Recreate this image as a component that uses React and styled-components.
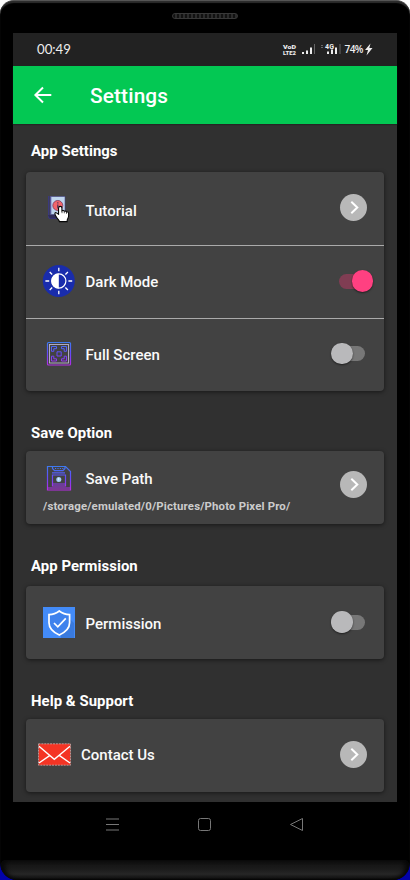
import React, { useState } from "react";
import styled, { createGlobalStyle } from "styled-components";

const GlobalStyle = createGlobalStyle`
  * { box-sizing: border-box; }
  body { margin: 0; background: linear-gradient(#fff 0 440px, #0202a8 440px); font-family: Roboto, sans-serif; }
  button { font: inherit; border: 0; padding: 0; background: none; cursor: pointer; }
  svg { display: block; }
`;

const Phone = styled.div`
  width: 410px;
  height: 880px;
  display: flex;
  flex-direction: column;
  background: #000;
  border-radius: 14px 14px 17px 17px;
  border-top: 1px solid #555;
  box-shadow: inset 0 2px 1px #2d2d2d;
  overflow: hidden;
`;

const Earpiece = styled.div`
  width: 66px;
  height: 6px;
  margin: 12px auto 14px;
  border: 1px solid #383838;
  border-radius: 3px;
  background: repeating-linear-gradient(90deg, #111 0 2px, #2b2b2b 2px 4px);
`;

const Screen = styled.main`
  width: 384px;
  height: 769px;
  margin: 0 auto 0 13px;
  display: flex;
  flex-direction: column;
  background: #303030;
`;

const StatusBar = styled.div`
  height: 33px;
  flex: none;
  display: flex;
  justify-content: space-between;
  padding: 0 23px 0 24px;
  background: #222;
  color: #eee;
`;

const Clock = styled.time`
  font: 400 13.2px/33px Lato, sans-serif;
  letter-spacing: 0;
`;

const Toolbar = styled.header`
  height: 58px;
  flex: none;
  display: flex;
  align-items: center;
  padding-left: 20px;
  background: #03c853;
  box-shadow: 0 1px 1px #252525;
  color: #fff;
`;

const Title = styled.h1`
  margin: 2px 0 0 37px;
  font-size: 20.8px;
  font-weight: 500;
  line-height: 26px;
  letter-spacing: 0.15px;
`;

const Content = styled.div`
  padding: 0 13px;
`;

const Heading = styled.h2`
  margin: ${(p) => p.$top}px 0 ${(p) => p.$bottom}px 5px;
  color: #fff;
  font-size: 14.9px;
  font-weight: 700;
  line-height: 20px;
  letter-spacing: 0.05px;
`;

const Card = styled.section`
  width: 358px;
  border-radius: 4px;
  background: #424242;
  box-shadow: 0 1px 4px #0008;
`;

const Row = styled.div`
  height: 73px;
  display: flex;
  align-items: center;
  padding: 0 17px 0 ${(p) => p.$left ?? 15}px;
  & + & { border-top: 1px solid #aaa; }
`;

const IconCell = styled.span`
  width: 36px;
  flex: none;
  display: flex;
  justify-content: center;
  margin-bottom: ${(p) => p.$lift ?? 2}px;
`;

const Label = styled.span`
  flex: 1;
  margin-left: ${(p) => p.$gap ?? 8.5}px;
  padding-bottom: 1px;
  padding-top: ${(p) => p.$drop ?? 0}px;
  color: #fafafa;
  font-size: 15px;
  font-weight: 500;
  line-height: 20px;
`;

const RoundButton = styled.button`
  width: 27px;
  height: 27px;
  margin-bottom: ${(p) => p.$lift ?? 2}px;
  border-radius: 50%;
  background: #b8b8b8;
`;

const Track = styled.button`
  width: 34px;
  height: 15px;
  margin-right: ${(p) => (p.$on ? -6 : 2)}px;
  margin-bottom: ${(p) => p.$lift ?? 3}px;
  display: flex;
  align-items: center;
  justify-content: ${(p) => (p.$on ? "flex-end" : "flex-start")};
  border-radius: 8px;
  background: ${(p) => (p.$on ? "#803d53" : "#777")};
`;

const Thumb = styled.span`
  width: 21.5px;
  height: 21.5px;
  flex: none;
  border-radius: 50%;
  background: ${(p) => (p.$on ? "#ff4081" : "#b9b9bb")};
  box-shadow: 0 1px 2px #0008;
`;

const PathCard = styled(Card)`
  height: 73px;
  display: flex;
  align-items: center;
  justify-content: space-between;
  padding-right: 17px;
`;

const PathInfo = styled.div`
  height: 73px;
  padding: 10px 0 0 15px;
`;

const PathName = styled.div`
  display: flex;
  align-items: center;
  height: 34px;
`;

const PathText = styled.div`
  margin: 4px 0 0 2px;
  color: #ccc;
  font-size: 11.4px;
  font-weight: 700;
  line-height: 14px;
  letter-spacing: 0.16px;
`;

const NavBar = styled.nav`
  height: 45px;
  display: flex;
  align-items: center;
  padding-left: 105px;
  gap: 77px;
`;

const Chin = styled.div`
  height: 20px;
  margin: 13px 1px 0;
  border-radius: 5px 5px 15px 15px;
  background: linear-gradient(#101010, #1b1b1b 45%, #262626 70%, #191919 90%, #000);
  box-shadow: inset 4px 0 4px #080808, inset -4px 0 4px #080808;
`;

const StatusIcons = () => (
  <svg width="92" height="33" viewBox="0 0 92 33" fill="#eee">
    <g fontFamily="Roboto" fontWeight="900" fontSize="6">
      <text x="1" y="15.5" textLength="13" lengthAdjust="spacingAndGlyphs">VoD</text>
      <text x="1" y="22" textLength="13" lengthAdjust="spacingAndGlyphs">LTE2</text>
    </g>
    <path d="M20 19h2v2h-2zM24 17.5h2V21h-2zM28 14.5h2V21h-2zM45 18.5h2V21h-2zM49 16.5h2V21h-2zM53 14.5h2V21h-2z" />
    <path d="M32 11h1v10h-1zM57.5 11h1v10h-1zM39 12h2v1h-2zM39 14h2v1h-2z" fill="#666" />
    <text x="43" y="15.5" fontFamily="Roboto" fontWeight="700" fontSize="7" textLength="9">4G</text>
    <text x="62.5" y="19.7" fontFamily="Open Sans" fontWeight="600" fontSize="10" textLength="19">74%</text>
    <path d="M88.5 10.5 83 17h3l-1.5 5.5L90.5 15h-3.2z" />
  </svg>
);

const BackArrow = () => (
  <svg width="20" height="18" viewBox="0 0 20 18" fill="none" stroke="#fff" strokeWidth="2">
    <path d="M18.3 9H3M10 1.5 2.4 9 10 16.5" />
  </svg>
);

const Chevron = () => (
  <svg width="27" height="27" viewBox="0 0 27 27" fill="none" stroke="#fff" strokeWidth="2">
    <path d="m11.3 7.8 6 5.7-6 5.7" />
  </svg>
);

const TutorialIcon = () => (
  <svg width="36" height="36" viewBox="0 0 36 36">
    <path d="M7.8 6v20.5c0 1 1 2 2.4 2h12" stroke="#39378b" strokeWidth="1.2" fill="none" />
    <path d="M7 25h17v3.5H9Z" fill="#302d59" />
    <path d="M9.5 6.5H24V24.5H9.5z" fill="#bfd5ee" stroke="#454488" strokeWidth=".6" />
    <path d="M9.8 6.5v18" stroke="#5756a0" strokeWidth="1" />
    <circle cx="16.8" cy="15.5" r="5" fill="#f2656b" stroke="#7a365b" strokeWidth=".8" />
    <path d="M16.2 12.3h1.2v1.2h-1.2zm0 2.2h1.2v4h-1.2z" fill="#46315d" />
    <path d="M18.6 17.5c1.1 0 1.5.7 1.5 1.8v2.2c1-.6 1.8-.3 2.2.4 1-.4 1.6 0 2 .7 1.3-.2 2 .4 2 1.5v2.3c0 1.5-1 2.5-1.3 3.8v1.4h-7.2c-.2-1.8-1.7-2.3-2.7-4-.6-1-1.3-2-1.5-3.3-.1-1 .7-1.2 1.4-.8l2 1.2v-5.4c0-1.1.5-1.8 1.6-1.8Z" fill="#fff" stroke="#070707" strokeWidth="1" transform="translate(-.8 -2.5) scale(1.08)" />
    <path d="M21 21v2.2M23.3 21.3v2M25.5 22v1.8" stroke="#111" strokeWidth=".7" />
  </svg>
);

const DarkModeIcon = () => (
  <svg width="36" height="36" viewBox="0 0 36 36">
    <circle cx="17.8" cy="18" r="16" fill="#192cac" />
    <circle cx="17.8" cy="18" r="7.1" fill="#192cac" stroke="#fff" strokeWidth="1.2" />
    <path d="M17.8 10.5a7.5 7.5 0 0 0 0 15z" fill="#fff" />
    <path d="M17.8 4.8v3.4M17.8 27.8v3.4M4.4 18h3.8M27.4 18h3.8M8.7 9l2.5 2.5M24.4 24.5l2.5 2.5M8.7 27l2.5-2.5M24.4 11.5 26.9 9" stroke="#fff" strokeWidth="1.3" />
  </svg>
);

const Gradient = ({ id }) => (
  <linearGradient id={id} x1="0" y1="6" x2="0" y2="30" gradientUnits="userSpaceOnUse">
    <stop stopColor="#3d7cf0" />
    <stop offset=".48" stopColor="#654afb" />
    <stop offset="1" stopColor="#b82be4" />
  </linearGradient>
);

const FullScreenIcon = () => (
  <svg width="36" height="36" viewBox="0 0 36 36" fill="none">
    <defs><Gradient id="frame" /></defs>
    <rect x="6.5" y="6.5" width="23" height="22.5" rx="1" stroke="url(#frame)" strokeWidth="1.2" />
    <rect x="8.5" y="8.5" width="19" height="18.5" stroke="#bbb6cf" strokeWidth=".9" />
    <g stroke="url(#frame)" strokeWidth="1">
      <path d="M10.5 10.5h5v2.2h-2.7v2.6h-2.3zM25.5 10.5h-5v2.2h2.7v2.6h2.3zM10.5 25h5v-2.2h-2.7v-2.6h-2.3zM25.5 25h-5v-2.2h2.7v-2.6h2.3z" />
      <path d="M16 15.8h4.2V20H16z" />
    </g>
  </svg>
);

const DiskIcon = () => (
  <svg width="36" height="36" viewBox="0 0 36 36" fill="none">
    <defs><Gradient id="disk" /></defs>
    <g stroke="url(#disk)" strokeWidth="1.2">
      <path d="M6.5 6.5h18l5 5v18.5h-23z" />
      <path d="M6.5 28h23M11 12.8h13M11.5 15h13v11h-13zM11.5 24h13" />
      <path d="M11.5 6.5v2l2 2.2h8.5l2-2.2v-2M14 8.5h1.2m1.2 0h1.2m1.2 0H20m1.2 0h1.2" />
    </g>
    <circle cx="17.8" cy="19.5" r="2.5" fill="#a4cdf9" />
    <path d="M17.7 18v2.3" stroke="#eefaff" strokeWidth=".8" />
  </svg>
);

const ShieldIcon = () => (
  <svg width="32" height="31" viewBox="0 0 32 31" fill="none">
    <path fill="#438bf8" d="M0 0h32v31H0z" />
    <path d="m17 3 14 13v15H18z" fill="#397ade" />
    <path d="M16.3 4c3 2.4 6.5 3.5 10.3 3.6v8.2c0 6-4.5 9.6-10.3 12.3C10.5 25.4 6 21.8 6 15.8V7.6C9.8 7.5 13.3 6.4 16.3 4Z" fill="#3f82ed" stroke="#fff" strokeWidth="1.7" />
    <path d="m11 16 3.8 3.8 8-8.4" stroke="#fff" strokeWidth="1.7" />
  </svg>
);

const MailIcon = () => (
  <svg width="33" height="23" viewBox="0 0 34 23" fill="none">
    <path fill="#f43424" d="M.5.5h33v22H.5z" />
    <path d="M.5.5h33v22H.5z" stroke="#bcb5b5" strokeWidth=".8" strokeDasharray="2 1" />
    <path d="m1 3 15.8 13.5L33 3M1 20.2 12 12.7M33 20.2l-10.8-7.5" stroke="#fff" strokeWidth="1.4" />
  </svg>
);

const NavIcon = ({ d }) => (
  <svg width="15" height="15" viewBox="0 0 15 15" fill="none" stroke="#777">
    <path d={d} />
  </svg>
);

function Switch({ initial = false, label, lift }) {
  const [on, setOn] = useState(initial);
  return (
    <Track type="button" role="switch" aria-label={label} aria-checked={on} $on={on} $lift={lift} onClick={() => setOn(!on)}>
      <Thumb $on={on} />
    </Track>
  );
}

export default function App() {
  return (
    <>
      <GlobalStyle />
      <Phone>
        <Earpiece />
        <Screen>
          <StatusBar><Clock>00:49</Clock><StatusIcons /></StatusBar>
          <Toolbar><button aria-label="Back"><BackArrow /></button><Title>Settings</Title></Toolbar>
          <Content>
            <Heading $top={17} $bottom={11}>App Settings</Heading>
            <Card>
              <Row><IconCell $lift={1}><TutorialIcon /></IconCell><Label $drop={5}>Tutorial</Label><RoundButton aria-label="Tutorial"><Chevron /></RoundButton></Row>
              <Row><IconCell><DarkModeIcon /></IconCell><Label>Dark Mode</Label><Switch initial label="Dark Mode" lift={2} /></Row>
              <Row><IconCell><FullScreenIcon /></IconCell><Label>Full Screen</Label><Switch label="Full Screen" /></Row>
            </Card>
            <Heading $top={32} $bottom={8}>Save Option</Heading>
            <PathCard>
              <PathInfo>
                <PathName><IconCell $lift={1}><DiskIcon /></IconCell><Label $drop={3}>Save Path</Label></PathName>
                <PathText>/storage/emulated/0/Pictures/Photo Pixel Pro/</PathText>
              </PathInfo>
              <RoundButton aria-label="Save Path" $lift={7}><Chevron /></RoundButton>
            </PathCard>
            <Heading $top={32} $bottom={10}>App Permission</Heading>
            <Card><Row><IconCell $lift={0}><ShieldIcon /></IconCell><Label $drop={4}>Permission</Label><Switch label="Permission" lift={1} /></Row></Card>
            <Heading $top={32} $bottom={8}>Help &amp; Support</Heading>
            <Card><Row $left={10.5}><IconCell><MailIcon /></IconCell><Label>Contact Us</Label><RoundButton aria-label="Contact Us"><Chevron /></RoundButton></Row></Card>
          </Content>
        </Screen>
        <NavBar>
          <NavIcon d="M1 2h13M1 7.5h13M1 13h13" />
          <NavIcon d="M3.5 1.5h8q2 0 2 2v8q0 2-2 2h-8q-2 0-2-2v-8q0-2 2-2Z" />
          <NavIcon d="M13.5 1.5v12L1.5 7.5Z" />
        </NavBar>
        <Chin />
      </Phone>
    </>
  );
}
